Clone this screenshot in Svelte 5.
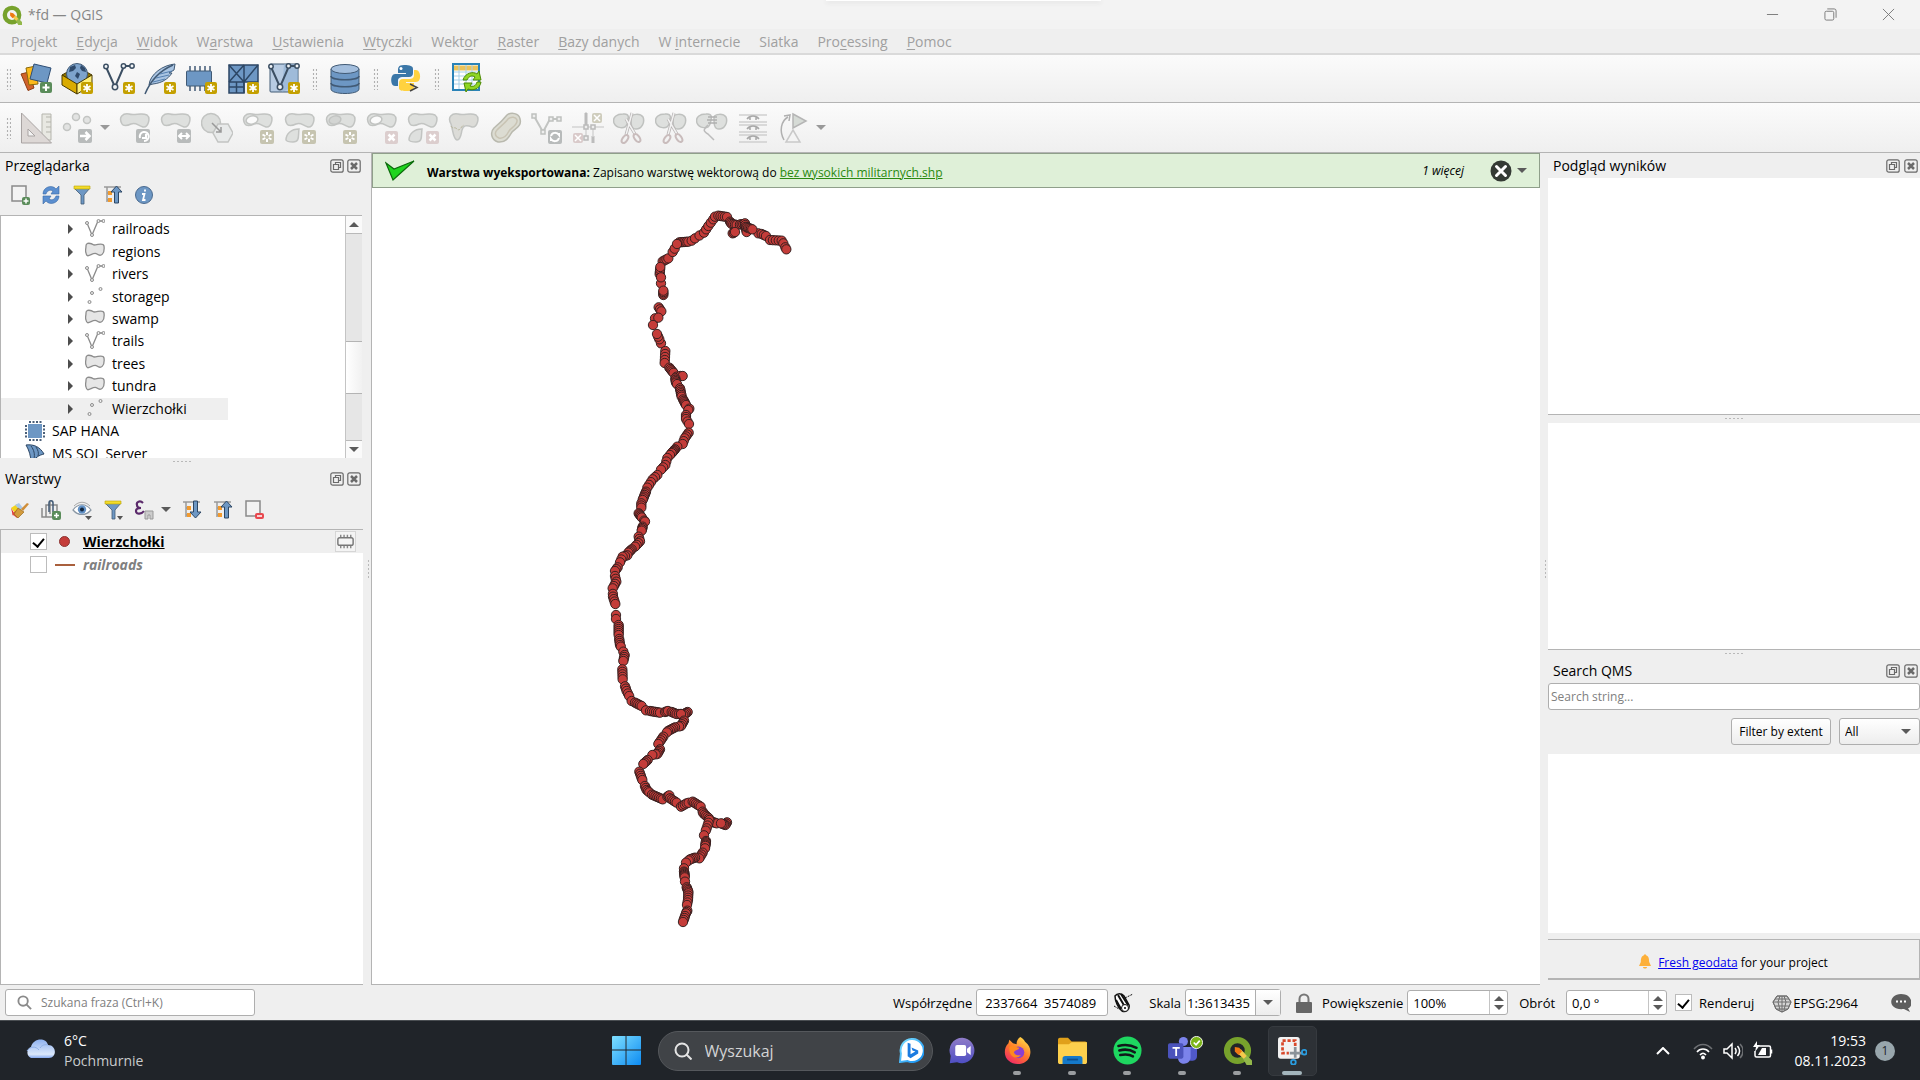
<script>
  const menus = [
    ['Pro', 'j', 'ekt'], ['', 'E', 'dycja'], ['', 'W', 'idok'], ['W', 'a', 'rstwa'], ['', 'U', 'stawienia'],
    ['', 'W', 'tyczki'], ['Wekt', 'o', 'r'], ['', 'R', 'aster'], ['', 'B', 'azy danych'], ['W ', 'i', 'nternecie'],
    ['Siatka', '', ''], ['Pro', 'c', 'essing'], ['', 'P', 'omoc']
  ];
  const dataTools = ['sources', 'package', 'newline', 'feather', 'memory', 'mesh', 'gpx'];
  const editTools = ['rotate', 'move', 'simplify', 'addring', 'addpart', 'fillring', 'delring', 'delpart', 'reshape', 'offset', 'vertex', 'trim', 'split', 'split', 'merge', 'align', 'turn'];
  const tree = [
    ['line', 'railroads'], ['poly', 'regions'], ['line', 'rivers'], ['point', 'storagep'], ['poly', 'swamp'],
    ['line', 'trails'], ['poly', 'trees'], ['poly', 'tundra'], ['point', 'Wierzchołki']
  ];
  const apps = ['Chat', 'Firefox', 'Eksplorator plików', 'Spotify', 'Teams', 'QGIS', 'Narzędzie Wycinanie'];

  // Each run: spacing, then the x, y pairs of the line that its vertices follow.
  const runs = [
    [7, 535, 130, 545, 132, 558, 138], [8, 570, 150, 605, 152, 610, 160, 619, 178],
    [6, 298, 157, 325, 155, 335, 152], [14, 345, 145, 372, 128, 385, 108, 400, 88], [7, 405, 80, 415, 77, 441, 81],
    [5, 450, 95, 455, 102, 470, 105, 490, 102], [5, 495, 100, 500, 126], [5, 500, 112, 517, 118], [5, 458, 130, 465, 126],
    [6, 248, 214, 265, 205], [12, 278, 186, 284, 176, 291, 162], [7, 239, 252, 241, 231], [18, 243, 280, 243, 262],
    [5, 250, 315, 250, 302], [9, 236, 352, 244, 364], [9, 225, 385, 235, 383], [9, 219, 405], [9, 243, 460, 238, 448, 231, 432],
    [9, 256, 483, 254, 519], [5, 268, 533, 290, 560], [9, 301, 558, 308, 558],
    [5, 286, 565, 288, 578, 300, 595, 305, 620, 318, 645], [5, 328, 656, 325, 660], [8, 318, 675, 318, 687, 327, 702, 326, 728, 314, 745, 308, 762, 292, 770],
    [4, 285, 778, 270, 795], [9, 262, 804, 256, 825, 243, 839], [10, 232, 855, 218, 868, 202, 893],
    [5, 198, 905, 188, 930], [7, 184, 940, 184, 953], [4, 176, 970, 195, 995], [4, 188, 1010, 185, 1022],
    [7, 176, 1040, 180, 1054, 165, 1070], [5, 155, 1078, 145, 1088], [8, 142, 1096, 128, 1100, 120, 1117],
    [6, 113, 1132, 105, 1143], [8, 105, 1158, 109, 1175, 98, 1195, 99, 1220, 106, 1242],
    [9, 108, 1275, 108, 1287], [6, 116, 1305, 116, 1335, 120, 1365, 130, 1385], [7, 134, 1395, 130, 1413],
    [8, 127, 1438, 128, 1468, 140, 1503, 155, 1533], [6, 165, 1538, 185, 1548, 198, 1561],
    [6, 210, 1563, 240, 1568], [6, 255, 1566, 264, 1563], [6, 275, 1566, 290, 1572, 303, 1572], [5, 316, 1570, 323, 1566, 310, 1575, 303, 1572],
    [6, 312, 1592, 303, 1608, 285, 1612, 264, 1623, 250, 1640, 235, 1662], [5, 240, 1678, 232, 1692, 217, 1695],
    [6, 203, 1710, 190, 1722], [6, 178, 1745, 187, 1770, 200, 1800, 216, 1814, 248, 1828],
    [4, 262, 1820, 268, 1816], [6, 270, 1825, 290, 1838, 303, 1850, 320, 1840, 338, 1835, 362, 1850, 370, 1870, 387, 1885],
    [5, 395, 1895, 410, 1900], [5, 441, 1897, 436, 1905, 423, 1900], [8, 388, 1890, 380, 1915, 372, 1936],
    [4, 378, 1953, 375, 1975], [7, 368, 1988, 358, 2005], [5, 345, 2003, 330, 2008, 318, 2018],
    [8, 312, 2035, 312, 2045], [4, 313, 2048, 314, 2062], [9, 315, 2075], [5, 320, 2092, 325, 2105], [7, 325, 2110, 324, 2130, 321, 2145],
    [5, 322, 2162, 318, 2170], [7, 315, 2178, 309, 2196]
  ];
  // Dense runs leave out two vertices of every seven, so whole markers show between the overlaps.
  const vertices = runs.flatMap(([step, ...c]) => {
    const out = [[c[0], c[1]]];
    let count = 0;
    for (let i = 2; i < c.length; i += 2) {
      const [x0, y0, x1, y1] = [c[i - 2], c[i - 1], c[i], c[i + 1]];
      const n = Math.max(1, Math.round(Math.hypot(x1 - x0, y1 - y0) / step));
      for (let k = 1; k <= n; k++) {
        const gap = step < 9 && [4, 5].includes(count++ % 7) && k < n;
        if (!gap) out.push([x0 + ((x1 - x0) * k) / n, y0 + ((y1 - y0) * k) / n]);
      }
    }
    return out;
  });
</script>

{#snippet star()}
  <rect x="20" y="19" width="12" height="12" rx="2" fill="#c4a000" />
  <path d="M26 21v8M22.500 23l7 4M29.500 23l-7 4" stroke="#fff" stroke-width="1.800" fill="none" />
{/snippet}

{#snippet greystar()}
  <rect x="18" y="18" width="14" height="14" rx="2" fill="#c6c4b0" />
  <path d="M25 20v10M20.500 22.500l9 5M29.500 22.500l-9 5" stroke="#fff" stroke-width="2" />
  <circle cx="25" cy="25" r="2" fill="#c6c4b0" />
{/snippet}

{#snippet greycross()}
  <rect x="19" y="19" width="13" height="13" rx="2" fill="#dccece" />
  <path d="M22.500 22.500l6 6M28.500 22.500l-6 6" stroke="#fff" stroke-width="2.500" />
{/snippet}

{#snippet qgis()}
  <svg class="qgis" viewBox="0 0 32 32" aria-hidden="true">
    <circle cx="16" cy="16" r="11.500" fill="none" stroke="#77a22c" stroke-width="7" />
    <path d="M18 18l4-1 10 10v5h-6z" fill="#93b84a" />
    <path d="M16 14l4 1 6 7-3 3-7-6z" fill="#f5c94c" />
    <path d="M13 12l5 1 3 4-4 4-4-4z" fill="#ee7913" />
  </svg>
{/snippet}

{#snippet tool(name)}
  <svg class="i32" viewBox="0 0 32 32" aria-hidden="true">
    {#if name === 'sources'}
      <path d="M1 11l8-2 5 16-6 2.500z" fill="#d0622b" stroke="#8f3d14" />
      <path d="M6 5l10-2 2 18-9 1z" fill="#fcb91b" stroke="#8a6a0a" />
      <path d="M14 1l17 4-4 15-17-4z" fill="#6d97c4" stroke="#2f4e75" />
      <rect x="20" y="19" width="12" height="11" rx="2" fill="#5a8c5a" />
      <path d="M26 21v7M22.500 24.500h7" stroke="#fff" stroke-width="2" />
    {:else if name === 'package'}
      <path d="M1 12l9-5h12l9 5-15 9z" fill="#8d7300" stroke="#4a3b00" />
      <circle cx="16" cy="11" r="10.500" fill="#7da3cc" stroke="#415a75" />
      <path d="M9 4l5-2 1 3-3 3-4 1zM20 2l4 3 1 4-4-1-2-3zM16 9l3 2-2 5-3-3z" fill="#2f4a6b" />
      <path d="M1 12l15 9v10L1 22z" fill="#d9ab00" stroke="#4a3b00" />
      <path d="M16 21l15-9v10l-15 9z" fill="#fff07a" stroke="#4a3b00" />
      {@render star()}
    {:else if name === 'newline' || name === 'gpx'}
      {#if name === 'gpx'}
        <rect x="2" y="1" width="28" height="28" rx="1" fill="#b7cbe2" stroke="#415a75" />
        <path d="M16 1h14v20L14 29z" fill="#8fb0d3" opacity=".6" />
      {/if}
      <path d="M3 4l9 20 9-21h8" fill="none" stroke="#3c4f63" stroke-width="2" />
      <g fill="#f2f5f8" stroke="#3c4f63" stroke-width="1.500"><circle cx="3" cy="3.500" r="2.200" /><circle cx="12" cy="24" r="2.700" /><circle cx="20.500" cy="3" r="2.200" /><circle cx="29" cy="3" r="2.200" /></g>
      {@render star()}
    {:else if name === 'feather'}
      <path d="M31 1C19 2 6 11 5 22l4-1c9-1 15-5 19-11l-3 0 5-3z" fill="#a9c4e2" stroke="#415a75" />
      <path d="M1 31C6 19 15 8 29 2" stroke="#415a75" stroke-width="1.500" fill="none" />
      <path d="M9 19l12-3M12 15l13-3M16 11l12-3" stroke="#5580b0" />
      {@render star()}
    {:else if name === 'memory'}
      <path d="M5 3v25M10 3v25M15 3v25M20 3v25M25 3v14" stroke="#415a75" stroke-width="1.500" />
      <rect x="1.500" y="8" width="25" height="15" rx="1" fill="#6d97c4" stroke="#415a75" />
      {@render star()}
    {:else if name === 'mesh'}
      <path d="M2 2h29v17H17v11H2z" fill="#6d97c4" stroke="#2c4664" stroke-width="1.500" />
      <path d="M17 2v28M2 19h15M2 24h15M9.500 19v11M2 2l15 17M17 2L2 19M31 2L17 19" fill="none" stroke="#2c4664" stroke-width="1.500" />
      {@render star()}
    {:else if name === 'database'}
      <path d="M2 6v20c0 6 28 6 28 0V6" fill="#6d97c4" stroke="#415a75" />
      <path d="M2 13c0 5 28 5 28 0M2 20c0 5 28 5 28 0" fill="none" stroke="#415a75" stroke-width="1.500" />
      <ellipse cx="16" cy="6" rx="14" ry="4.500" fill="#a3bedd" stroke="#415a75" />
    {:else if name === 'python'}
      <path d="M14 2c-6 0-6 3-6 6v2h8v1H5c-5 0-5 12 0 12h3v-5c0-3 2-4 5-4h6c3 0 4-2 4-4V6c0-3-3-4-9-4z" fill="#3b77a8" />
      <path d="M18 28c6 0 6-3 6-6v-2h-8v-1h10c6 0 5-12 0-12h-2v5c0 3-2 4-5 4h-6c-3 0-4 2-4 4v5c0 3 4 3 9 3z" fill="#ffd23f" />
      <circle cx="11" cy="5.500" r="1.500" fill="#fff" />
      <path d="M20 21l7 3.500-7 3.500" fill="none" stroke="#444" stroke-width="1.500" />
    {:else if name === 'refreshtable'}
      <rect x="2" y="1" width="26" height="26" fill="#fff" stroke="#2a83b8" stroke-width="2" />
      <path d="M3 5h24" stroke="#ecc35a" stroke-width="5" />
      <path d="M3 9h24M3 13h24M3 17h24M3 21h24M8 2v24M15 2v24M21 2v24" stroke="#a9d0e8" />
      <path d="M12 17c2-7 10-9 14-6l2-3 2 9h-8l2-3c-3-2-6-1-8 3z" fill="#8fd624" stroke="#4d8a05" />
      <path d="M30 19c-1 7-8 9-13 7l-2 3-2-9h8l-2 3c3 1 6 0 7-4z" fill="#8fd624" stroke="#4d8a05" />
    {:else if name === 'ruler'}
      <path d="M22 2h9v26h-9z" fill="#e8e8e2" stroke="#b5b5ad" />
      <path d="M26 5h5M26 10h5M26 15h5M26 20h5" stroke="#b5b5ad" />
      <path fill-rule="evenodd" d="M1.500 1v30h30zM8 17v7h7z" fill="#ddd8d6" stroke="#a8a3a2" />
    {:else if name === 'points'}
      <g fill="#e2e3e2" stroke="#c3c5c3" stroke-width="1.500"><circle cx="14" cy="5" r="3.500" /><circle cx="25" cy="8" r="3.500" /><circle cx="5" cy="15" r="3.500" /></g>
      <rect x="16" y="17" width="14" height="14" rx="2" fill="#b8bbbb" />
      <path d="M18 24h9M23.500 20l4 4-4 4" stroke="#fff" stroke-width="2.500" fill="none" />
    {:else if ['rotate', 'move', 'addring', 'addpart', 'fillring', 'delring', 'delpart'].includes(name)}
      <path d="M3 12C-1 5 4 1 10 2c6 2 12-2 18 1 4 3 1 13-4 12C18 13 17 10 12 12c-4 2-8 2-9 0z" fill="#dee0de" stroke="#c2c4c2" stroke-width="1.500" />
      {#if name === 'rotate' || name === 'move'}
        <rect x="17" y="17" width="14" height="14" rx="2" fill="#b8bbbb" />
        {#if name === 'rotate'}<path d="M21 26a4.500 4.500 0 1 1 4 3M27 22v4h-4" stroke="#fff" stroke-width="2" fill="none" />
        {:else}<path d="M19.500 24h9M22 21l-3 3 3 3M26 21l3 3-3 3" stroke="#fff" stroke-width="2" fill="none" />{/if}
      {:else}
        {#if name.endsWith('ring')}<ellipse cx="10" cy="8" rx="6" ry="4" transform="rotate(-15 10 8)" fill={name === 'fillring' ? '#d3d5d3' : '#fbfbfb'} stroke="#c2c4c2" stroke-width="1.500" />{/if}
        {#if name.endsWith('part')}<path d="M2 28c0-6 5-11 13-11-1 7 1 13-6 13-3 0-6 0-7-2z" fill="#dee0de" stroke="#c2c4c2" stroke-width="1.500" />{/if}
        {#if name.startsWith('del')}{@render greycross()}{:else}{@render greystar()}{/if}
      {/if}
    {:else if name === 'simplify'}
      <circle cx="10" cy="11" r="9.500" fill="#dcdedc" stroke="#c2c4c2" stroke-width="1.500" />
      <path d="M17 12h10l5 9-5 9H17l-5-9z" fill="#e8eaea" stroke="#c2c4c2" stroke-width="1.500" />
      <path d="M11 11l9 9M20 15v5h-5" fill="none" stroke="#999" stroke-width="1.500" />
    {:else if name === 'reshape'}
      <path d="M3 12C-1 5 4 1 10 2c6 2 12-2 18 1 4 3 1 13-4 12-5-2-9-2-10 3-1 4-1 10-5 10-4-1-4-10-6-16z" fill="#dcdcd8" stroke="#c2c4c2" stroke-width="1.500" />
      <path d="M3 14c2 4 3 0 6 3s4-3 7-4" stroke="#b9b69c" stroke-dasharray="3 1" fill="none" />
    {:else if name === 'offset'}
      <path d="M17 3c4-3 12-2 13 4 2 7-4 9-8 13-3 5-6 11-14 10C1 28 0 20 4 16c5-4 9-8 13-13z" fill="#dcdcd2" stroke="#b9b9ae" stroke-width="1.500" />
      <path d="M18 7c3-3 8-2 9 1 1 5-5 7-8 11-2 4-5 8-10 7-5-2-4-6-2-8 4-4 8-7 11-11z" fill="none" stroke="#c9c4b4" stroke-width="1.500" />
    {:else if name === 'vertex'}
      <path d="M3 4l9 16 7-13h9" fill="none" stroke="#c2c4c2" stroke-width="2" />
      <g fill="#eee" stroke="#bfc1bf" stroke-width="1.500"><path d="M1 2h4v4H1zM10 18h4v4h-4zM18 5h4v4h-4zM26 5h4v4h-4z" /></g>
      <rect x="17" y="18" width="14" height="14" rx="2" fill="#b8bbbb" />
      <path d="M20 24c1-4 6-4 8-1v-2M28 26c-1 4-6 4-8 1v2" stroke="#fff" stroke-width="2" fill="none" />
    {:else if name === 'trim'}
      <path d="M0 15h32M14 0v28" stroke="#d4d4d4" stroke-width="1.500" /><path d="M14 1v12M21 24v7" stroke="#bcbcbc" stroke-width="3" /><path d="M21 17v8" stroke="#d4d4d4" stroke-width="1.500" />
      <path d="M12 13h4v4h-4zM19 13h4v4h-4zM12 24h4v4h-4z" fill="#eee" stroke="#bbb" stroke-width="1.500" />
      <rect x="20" y="1" width="10" height="10" rx="2" fill="#cfcdbd" /><path d="M22 3l6 6M28 3l-6 6" stroke="#fff" stroke-width="1.500" />
      <rect x="1" y="21" width="10" height="10" rx="2" fill="#d9caca" /><path d="M3 23l6 6M9 23l-6 6" stroke="#fff" stroke-width="1.500" />
    {:else if name === 'split' || name === 'merge'}
      <path d="M10 2c8-1 5 6 4 10-2 6-11 4-13-1C-1 5 4 2 10 2zM18 5c1-3 9-4 12 0 2 5-1 12-7 12-5 0-5-5-5-12z" fill="#dee0de" stroke="#bfc1bf" stroke-width="1.500" />
      {#if name === 'split'}
        <path d="M19 1l-6 22M13 7l9 15" stroke="#b8b4b4" stroke-width="3" /><path d="M19 1l-6 22M13 7l9 15" stroke="#f2f2f2" stroke-width="1.500" />
        <ellipse cx="12" cy="27" rx="2.500" ry="4.500" transform="rotate(35 12 27)" fill="none" stroke="#c9bcbc" stroke-width="2" /><ellipse cx="24" cy="26" rx="2.500" ry="4.500" transform="rotate(-35 24 26)" fill="none" stroke="#c9bcbc" stroke-width="2" />
      {:else}
        <path d="M12 5h9M11 8h10M12 11h9" stroke="#b0b0b0" stroke-width="1.500" /><path d="M12 13c-5 5-5 6 0 9l6 6" fill="none" stroke="#bbb" stroke-width="1.500" />
      {/if}
    {:else if name === 'align'}
      <path d="M2 3h28M2 10h28M2 13h28M2 20h28M2 23h28M2 30h28" stroke="#d0d0d0" stroke-width="1.500" />
      <path d="M10 7c3-4 9-4 12 0M10 17c3-4 9-4 12 0M10 27c3-4 9-4 12 0M13 4v4M19 4v4M13 14v4M19 14v4M13 24v4M19 24v4" stroke="#a8a8a8" stroke-width="1.500" fill="none" />
    {:else if name === 'turn'}
      <path d="M15 2l13 7-13 7z" fill="#d6dbd6" stroke="#b5b5b5" stroke-width="1.500" /><path d="M15 18l7 12H8z" fill="#f4f4f4" stroke="#c9c9c9" stroke-width="1.500" />
      <path d="M6 28C1 19 3 9 10 5M6 4l6-1-1 6" fill="none" stroke="#b0b0b0" stroke-width="1.500" />
    {/if}
  </svg>
{/snippet}

{#snippet mini(name)}
  <svg class="i20" viewBox="0 0 20 20" aria-hidden="true">
    {#if name === 'add'}
      <rect x="2" y="1" width="14" height="15" fill="#f3f3f3" stroke="#8a8a8a" stroke-width="1.500" />
      <rect x="12" y="12" width="8" height="8" rx="2" fill="#5a8c5a" /><path d="M16 13.500v5M13.500 16h5" stroke="#fff" stroke-width="1.500" />
    {:else if name === 'refresh'}
      <path d="M2 9c0-7 9-10 13-5l3-3v8h-8l2-3C9 4 6 6 5 9z" fill="#5b8fd0" stroke="#3a6aa5" stroke-width=".6" /><path d="M18 11c0 7-9 10-13 5l-3 3v-8h8l-2 3c3 2 6 0 7-3z" fill="#5b8fd0" stroke="#3a6aa5" stroke-width=".6" />
    {:else if name === 'filter' || name === 'filter2'}
      <path d="M2 3h16l-6 7v9H9v-9z" fill="#6d97c4" stroke="#415a75" stroke-width=".8" /><path d="M2 1h16v3H2z" fill="#f3dc2c" stroke="#b9a100" stroke-width=".6" />
    {:else if name === 'collapse' || name === 'expand'}
      <path d="M1 2h17M4 2v15M4 8h4M4 15h4" stroke="#9a9a9a" stroke-width="1.500" fill="none" /><path d="M5 6h4v4H5zM5 13h4v4H5z" fill="#f29a2e" />
      <path d={name === 'collapse' ? 'M13.500 1l5.500 6h-3.500v11h-4V7H8z' : 'M13.500 18l5.500-6h-3.500V1h-4v11H8z'} fill="#6d97c4" stroke="#2c4664" />
    {:else if name === 'info'}
      <circle cx="10" cy="10" r="8.500" fill="#6d97c4" stroke="#4a6a8f" /><path d="M11 4.500l0 2M8 9h2.500l-1.500 6h2.500" stroke="#fff" stroke-width="1.800" fill="none" />
    {:else if name === 'brush'}
      <path d="M1 8l6-4 5 5-7 4z" fill="#f3d41c" /><path d="M1 8l3 5-1 3z" fill="#e22a2a" /><path d="M2 14l5 4 6-6-5-3z" fill="#e0473c" /><path d="M5 5l4-2 4 5-3 2z" fill="#a8c8ea" />
      <path d="M8 8l6 4-6 6-4-4z" fill="#d39b3c" stroke="#9a6a1c" stroke-width=".7" /><path d="M11 9l6-6 2 1-6 7z" fill="#cf8e3a" />
    {:else if name === 'group'}
      <path d="M1 8v9h9M5 5h11v12H5zM9 2v12" fill="none" stroke="#8a8a8a" stroke-width="1.500" /><path d="M8 12V3c0-3 4-3 4 0v9" fill="none" stroke="#415a75" stroke-width="1.500" />
      <rect x="11" y="11" width="9" height="9" rx="2" fill="#5a8c5a" /><path d="M15.500 13v5M13 15.500h5" stroke="#fff" stroke-width="1.500" />
    {:else if name === 'eye'}
      <path d="M1 10c5-7 13-7 18 0-5 6-13 6-18 0z" fill="#fff" stroke="#8a97a4" stroke-width="1.200" /><path d="M2 6c5-5 11-5 16 0" fill="none" stroke="#aaa" /><circle cx="10" cy="9.500" r="4.200" fill="#5f8fc4" /><circle cx="10" cy="9.500" r="2" fill="#12263d" /><path d="M13 16h7l-3.500 4z" fill="#555" />
    {:else if name === 'epsilon'}
      <path d="M9 3c-3-3-7-1-6 2 0 2 2 3 4 3-3 0-5 1-5 3 0 4 6 3 8 0" fill="none" stroke="#5b2a6b" stroke-width="2.200" /><path d="M11 11h8v8h-3v-4h-2v4h-3z" fill="#ccc" stroke="#999" />
    {:else if name === 'remove'}
      <rect x="2" y="1" width="14" height="15" fill="#f3f3f3" stroke="#8a8a8a" stroke-width="1.500" /><rect x="11" y="13" width="9" height="6" rx="2" fill="#e8484f" /><path d="M13 16h5" stroke="#fff" stroke-width="1.500" />
    {/if}
    {#if name === 'filter2'}<path d="M14 16h6l-3 4z" fill="#555" />{/if}
  </svg>
{/snippet}

{#snippet layer(kind)}
  <svg class="i20" viewBox="0 0 20 20" aria-hidden="true">
    {#if kind === 'line'}
      <path d="M2 4l5 12 6-14h6" fill="none" stroke="#8c8c8c" stroke-width="1.300" /><g fill="#eee" stroke="#8c8c8c"><circle cx="2" cy="4" r="1.500" /><circle cx="7" cy="16" r="1.500" /><circle cx="13.500" cy="2" r="1.500" /><circle cx="18.500" cy="2" r="1.500" /></g>
    {:else if kind === 'poly'}
      <path d="M1 4c0-4 5-3 8-1 4 0 9-3 10 1 1 8-3 11-7 8-4-3-10 6-11-1-1-3 0-4 0-7z" fill="#e6e6e6" stroke="#8c8c8c" stroke-width="1.300" />
    {:else}
      <g fill="#eee" stroke="#8c8c8c"><circle cx="7" cy="6" r="1.500" /><circle cx="15.500" cy="2" r="1.500" /><circle cx="4.500" cy="15" r="1.500" /></g>
    {/if}
  </svg>
{/snippet}

{#snippet dock(title)}
  <header class="dock">
    <h2>{title}</h2>
    <button aria-label="Odłącz panel {title}"><svg viewBox="0 0 14 14"><rect x=".8" y=".8" width="12.400" height="12.400" rx="2" /><path d="M3.500 5.500h5v5h-5zM5.500 5.500v-2h5v5h-2" /></svg></button>
    <button aria-label="Zamknij panel {title}"><svg viewBox="0 0 14 14"><rect x=".8" y=".8" width="12.400" height="12.400" rx="2" /><path class="thick" d="M4 4l6 6M10 4l-6 6" /></svg></button>
  </header>
{/snippet}

{#snippet app(i)}
  <svg class="appicon" viewBox="0 0 32 32" aria-hidden="true">
    {#if i === 0}
      <path d="M16 2a14 14 0 1 1-6 27l-8 1 1-8A14 14 0 0 1 16 2z" fill="url(#chat)" /><rect x="8" y="10" width="12" height="12" rx="2" fill="#fff" /><path d="M21 14l4-3v10l-4-3z" fill="#fff" />
    {:else if i === 1}
      <path d="M19 1c4 2 5 5 6 6 4 3 6 8 5 13-1 7-7 11-14 11S2 26 2 18c0-4 1-7 4-10l1-4 4 4 4 1c0-3 1-6 4-8z" fill="url(#fox)" /><circle cx="17" cy="18" r="6.500" fill="#8a3fd1" /><path d="M7 12c5-3 7 1 11 1-1 3-5 2-6 5 1 3 4 4 8 3-5 6-14 2-13-9z" fill="#ff8a1e" />
    {:else if i === 2}
      <path d="M0 4c0-1 1-2 2-2h9l4 4h15c1 0 2 1 2 2v6H0z" fill="#e0a01a" /><path d="M0 9h12l3-2h17v22c0 1-1 2-2 2H2c-1 0-2-1-2-2z" fill="#fdd04d" /><path d="M5 31v-6c0-2 1-3 3-3h16c2 0 3 1 3 3v6z" fill="#1579c9" /><path d="M10 26h12" stroke="#0c4f8f" stroke-width="2" />
    {:else if i === 3}
      <circle cx="16" cy="16" r="15.500" fill="#1ed760" /><path d="M6 11c8-2 14-1 20 2M7 16c7-2 12-1 17 2M8 21c6-1 10-1 14 1.500" fill="none" stroke="#10181a" stroke-width="2.800" stroke-linecap="round" />
    {:else if i === 4}
      <circle cx="17" cy="6" r="5" fill="#7b83eb" /><path d="M20 12h12v10c0 6-8 7-10 3z" fill="#5059c9" /><path d="M11 12h14v11c0 10-14 10-14 1z" fill="#7b83eb" /><rect x="0" y="8" width="17" height="17" rx="2" fill="#4b53bc" /><path d="M5 13h8M9 13v9" stroke="#fff" stroke-width="2" />
    {:else}
      <rect x="0" y="1" width="24" height="24" rx="3" fill="#f2f2f2" /><path d="M19 11V5H5v14h7" fill="none" stroke="#d8482b" stroke-width="3" stroke-dasharray="3.500 2" /><path d="M19 12v12M13 19h14" stroke="#8a9299" stroke-width="3" /><circle cx="29" cy="18" r="2.600" fill="none" stroke="#2a9de0" stroke-width="2" /><circle cx="17" cy="29" r="2.600" fill="none" stroke="#2a9de0" stroke-width="2" />
    {/if}
  </svg>
{/snippet}

<div class="window">
  <header class="title">
    {@render qgis()}
    <h1>*fd — QGIS</h1>
    <span class="notch"></span>
    <div class="wincontrols">
      <button aria-label="Minimalizuj"><svg viewBox="0 0 14 14"><path d="M1 7h12" /></svg></button>
      <button aria-label="Przywróć"><svg viewBox="0 0 14 14"><rect x="1" y="3.500" width="9.500" height="9.500" rx="1.500" /><path d="M3.500 1h7.500a2 2 0 0 1 2 2v7.500" /></svg></button>
      <button aria-label="Zamknij"><svg viewBox="0 0 14 14"><path d="M1 1l12 12M13 1L1 13" /></svg></button>
    </div>
  </header>

  <nav class="menu">
    {#each menus as [a, u, b]}<button><span>{a}<u>{u}</u>{b}</span></button>{/each}
  </nav>

  <div class="toolbar" role="toolbar" aria-label="Źródła danych">
    <i class="grip"></i>
    <div class="data">{#each dataTools as t}<button aria-label={t}>{@render tool(t)}</button>{/each}</div>
    {#each ['database', 'python', 'refreshtable'] as t}<i class="grip"></i><button class="single" aria-label={t}>{@render tool(t)}</button>{/each}
  </div>
  <div class="toolbar" role="toolbar" aria-label="Zaawansowana digitalizacja">
    <i class="grip"></i>
    <button class="first" aria-label="ruler">{@render tool('ruler')}</button>
    <button class="drop" aria-label="points">{@render tool('points')}<i class="tri"></i></button>
    <div class="edit">{#each editTools as t}<button aria-label={t}>{@render tool(t)}</button>{/each}</div>
    <button class="more" aria-label="Więcej narzędzi"><i class="tri"></i></button>
  </div>

  <main>
    <aside class="left">
      {@render dock('Przeglądarka')}
      <div class="minibar">
        {#each ['add', 'refresh', 'filter', 'collapse', 'info'] as t}<button aria-label={t}>{@render mini(t)}</button>{/each}
      </div>
      <div class="browser">
        <ul>
          {#each tree as [kind, name], i}
            <li class="child" class:selected={i === 8}><i class="tri side"></i>{@render layer(kind)}<span>{name}</span></li>
          {/each}
          <li class="provider"><svg class="i20" viewBox="0 0 20 20"><rect x="3" y="3" width="14" height="14" fill="#6d97c4" /><path d="M4 1h13M4 19h13M1 4v13M19 4v13" stroke="#4a5f78" stroke-width="2" stroke-dasharray="2 1.500" /></svg><span>SAP HANA</span></li>
          <li class="provider"><svg class="i20" viewBox="0 0 20 20"><path d="M1 1c8-1 14 2 18 9-5 1-9 4-13 9C6 12 4 6 1 1z" fill="#6d97c4" stroke="#2c4664" /><path d="M6 2c3 4 4 8 3 13M11 3c2 3 3 6 2 9" fill="none" stroke="#2c4664" /></svg><span>MS SQL Server</span></li>
        </ul>
        <div class="scroll"><button aria-label="W górę"><i class="tri up"></i></button><div class="track"><div class="thumb"></div></div><button aria-label="W dół"><i class="tri"></i></button></div>
      </div>
      <i class="split"></i>
      {@render dock('Warstwy')}
      <div class="minibar layersbar">
        {#each ['brush', 'group', 'eye', 'filter2', 'epsilon'] as t}<button aria-label={t}>{@render mini(t)}</button>{/each}
        <i class="tri"></i>
        {#each ['expand', 'collapse', 'remove'] as t}<button aria-label={t}>{@render mini(t)}</button>{/each}
      </div>
      <div class="layers">
        <label class="on"><input type="checkbox" checked /><i class="dot"></i><b>Wierzchołki</b>
          <svg class="mem" viewBox="0 0 22 22" aria-hidden="true"><rect x=".5" y=".5" width="21" height="21" fill="#f4f4f4" stroke="#d5d5d5" /><path d="M6 4v14M9.500 4v14M13 4v14M16.500 4v14" stroke="#888" stroke-width="1.500" /><rect x="3" y="7" width="16" height="8" rx="2" fill="#f4f4f4" stroke="#777" stroke-width="1.500" /></svg>
        </label>
        <label><input type="checkbox" /><i class="dash"></i><em>railroads</em></label>
      </div>
    </aside>

    <i class="vsplit"></i>

    <section class="canvas">
      <div class="message">
        <svg class="tick" viewBox="0 0 30 22" aria-hidden="true"><path d="M1 3l8 6L29 1 8 20z" fill="#1fd51f" stroke="#0b6b0b" stroke-width="1.200" /></svg>
        <p><b>Warstwa wyeksportowana:</b> Zapisano warstwę wektorową do <a href="#plik">bez wysokich militarnych.shp</a></p>
        <em>1 więcej</em>
        <button class="dismiss" aria-label="Zamknij komunikat"><svg viewBox="0 0 22 22"><circle cx="11" cy="11" r="10.500" fill="#343a34" /><path d="M6.500 6.500l9 9M15.500 6.500l-9 9" stroke="#fff" stroke-width="3" stroke-linecap="round" /></svg></button>
        <i class="tri"></i>
      </div>
      <svg class="map" role="img" aria-label="Wierzchołki">
        <g transform="translate(208 2) scale(.33333)" fill="#c43c39" stroke="#2e1d1d" stroke-width="2.800">
          {#each vertices as [x, y]}<circle cx={x} cy={y} r="14" />{/each}
        </g>
      </svg>
    </section>

    <i class="vsplit"></i>

    <aside class="right">
      {@render dock('Podgląd wyników')}
      <div class="pane one"></div>
      <i class="split"></i>
      <div class="pane two"></div>
      <i class="split"></i>
      {@render dock('Search QMS')}
      <input class="field" aria-label="Search QMS" placeholder="Search string..." />
      <div class="filters">
        <button>Filter by extent</button>
        <span class="select"><select aria-label="Typ"><option>All</option></select><i class="tri"></i></span>
      </div>
      <div class="pane three"></div>
      <p class="fresh"><svg viewBox="0 0 12 15" aria-hidden="true"><path d="M6 0l1.500 1.500C10 2.500 10 5 10.200 8L12 12H0l1.800-4C2 5 2 2.500 4.500 1.500zM4 13h4c0 2-4 2-4 0z" fill="#fdb03a" /></svg><span><a href="#geodata">Fresh geodata</a> for your project</span></p>
    </aside>
  </main>

  <footer class="status">
    <label class="locator"><svg viewBox="0 0 16 16"><circle cx="6.500" cy="6.500" r="5" /><path d="M10 10l5 5" /></svg><input aria-label="Szukaj" placeholder="Szukana fraza (Ctrl+K)" /></label>
    <label class="coord" for="coord">Współrzędne</label><input id="coord" class="field" value="2337664  3574089" />
    <svg class="bug" viewBox="0 0 20 20" aria-hidden="true"><path d="M1 3c2-3 7-3 9 0l5 9c1 4-3 8-7 6C4 15 1 8 1 3z" fill="#fff" stroke="#111" stroke-width="1.500" /><path d="M4 2l7 12M7 1l7 11M2 7l5 9" stroke="#111" stroke-width="2" /><path d="M11 5l8-4M0 13l5 3" stroke="#111" stroke-dasharray="2 1" /><circle cx="11" cy="15" r="3.500" fill="#fff" stroke="#111" /><circle cx="11" cy="15" r="1" /></svg>
    <label for="scale">Skala</label>
    <span class="combo"><input id="scale" value="1:3613435" /><button aria-label="Wybierz skalę"><i class="tri"></i></button></span>
    <svg class="lock" viewBox="0 0 16 20" aria-hidden="true"><path d="M3.500 10V6a4.500 4.500 0 0 1 9 0v4" fill="none" stroke="#777" stroke-width="2" /><rect y="9" width="16" height="11" rx="1" fill="#666" /></svg>
    <label for="zoom">Powiększenie</label>
    <span class="spin"><input id="zoom" value="100%" /><span><i class="tri up"></i><i class="tri"></i></span></span>
    <label class="rot" for="rot">Obrót</label>
    <span class="spin"><input id="rot" value="0,0 °" /><span><i class="tri up"></i><i class="tri"></i></span></span>
    <label class="render"><input type="checkbox" checked />Renderuj</label>
    <button class="crs"><svg viewBox="0 0 20 20" aria-hidden="true"><path d="M5 3h10l4 6-3 7-6 3-6-3-3-7z" fill="#d5d5d5" /><path d="M5 3h10l4 6-3 7-6 3-6-3-3-7zM3 6h14M1 9h18M3 13h14M5 16h10M8 3L6 9l2 8M12 3l2 6-2 8M10 3v16" /></svg>EPSG:2964</button>
    <button class="chat" aria-label="Komunikaty"><svg viewBox="0 0 20 20"><path d="M10 1c13 0 12 14 7 14l2 4-6-3C-4 18-3 1 10 1z" fill="#5e5e5e" /><path d="M5 8.500h2M9 8.500h2M13 8.500h2" stroke="#fff" stroke-width="2" /></svg></button>
  </footer>

  <footer class="taskbar">
    <button class="weather">
      <svg viewBox="0 0 30 20" aria-hidden="true"><path d="M6 19a6 6 0 0 1 0-11C8-1 21-2 23 6c9 0 9 13 1 13z" fill="url(#cloud)" /><path d="M2 12c3-5 9-5 12-1M15 9c2-3 5-4 8-3" fill="none" stroke="#8fb0e8" /></svg>
      <span>6°C<small>Pochmurnie</small></span>
    </button>
    <div class="apps">
      <button class="start" aria-label="Start"><svg viewBox="0 0 30 30"><path d="M0 1a1 1 0 0 1 1-1h13v14H0zM15 0h14a1 1 0 0 1 1 1v13H15zM0 15h14v15H1a1 1 0 0 1-1-1zM15 15h15v14a1 1 0 0 1-1 1H15z" fill="url(#win)" /></svg></button>
      <label class="search"><svg class="glass" viewBox="0 0 18 18"><circle cx="8" cy="8" r="6.500" /><path d="M12.500 12.500l5 5" /></svg><input aria-label="Wyszukaj" placeholder="Wyszukaj" />
        <svg class="bing" viewBox="0 0 26 26" aria-hidden="true"><path d="M13 1a12 12 0 1 1-4 23l-8 1 1-9A12 12 0 0 1 13 1z" fill="#fff" stroke="url(#win)" stroke-width="2" /><path d="M9 5l3 1v11l5-3-3-1-1-3 7 3v3l-8 5-3-2z" fill="#1b7be0" /></svg>
      </label>
      {#each apps as name, i}
        <button class="app" class:active={i === 6} aria-label={name}>
          {#if i === 5}{@render qgis()}{:else}{@render app(i)}{/if}
          {#if i === 4}<svg class="badge" viewBox="0 0 14 14"><circle cx="7" cy="7" r="6.500" fill="#7cb518" stroke="#fff" /><path d="M4 7l2.500 2.500L10.500 5" fill="none" stroke="#fff" stroke-width="1.800" /></svg>{/if}
          {#if i > 0}<i class="run"></i>{/if}
        </button>
      {/each}
    </div>
    <div class="tray">
      <button aria-label="Pokaż ukryte ikony"><svg class="chev" viewBox="0 0 14 8"><path d="M1 7l6-6 6 6" /></svg></button>
      <button class="net" aria-label="Sieć, dźwięk i bateria">
        <svg viewBox="0 0 20 20"><path d="M1 8c5-6 13-6 18 0" opacity=".35" /><path d="M4 11c3-4 9-4 12 0M7 14c2-2.500 4-2.500 6 0" /><circle cx="10" cy="16.500" r="1.200" fill="#fff" /></svg>
        <svg viewBox="0 0 20 20"><path d="M1 8h3l5-5v14l-5-5H1zM12 7c1.500 2 1.500 4 0 6M14.500 5c2.500 3 2.500 7 0 10" /><path d="M17 3c4 4 4 10 0 14" opacity=".35" /></svg>
        <svg viewBox="0 0 20 20"><path d="M6 5h10a1.500 1.500 0 0 1 1.500 1.500v8A1.500 1.500 0 0 1 16 16H3.500A1.500 1.500 0 0 1 2 14.500V10M18.500 8.500v4" /><path d="M9 7h4v7H5z" fill="#fff" stroke="none" /><path d="M4 0L0 6h3L2 11l5-7H4z" fill="#fff" stroke="none" /></svg>
      </button>
      <button class="clock"><time datetime="2023-11-08T19:53">19:53<br />08.11.2023</time></button>
      <span class="count">1</span>
    </div>
  </footer>
</div>

<svg class="defs" aria-hidden="true">
  <defs>
    <linearGradient id="win" x1="0" y1="0" x2="1" y2="1"><stop offset="0" stop-color="#7fe0ff" /><stop offset="1" stop-color="#0d8bf2" /></linearGradient>
    <linearGradient id="chat" x1="0" y1="0" x2="0" y2="1"><stop offset="0" stop-color="#8f7cc8" /><stop offset="1" stop-color="#4f4fc4" /></linearGradient>
    <linearGradient id="fox" x1=".8" y1="0" x2=".2" y2="1"><stop offset="0" stop-color="#ffe14a" /><stop offset=".5" stop-color="#ff7a2a" /><stop offset="1" stop-color="#f0246a" /></linearGradient>
    <linearGradient id="cloud" x1="0" y1="0" x2="0" y2="1"><stop offset="0" stop-color="#8fb2f0" /><stop offset=".8" stop-color="#dbe8fb" /><stop offset="1" stop-color="#86aaf0" /></linearGradient>
  </defs>
</svg>

<style>
  :global(body) { margin: 0; }
  .window { height: 100vh; display: flex; flex-direction: column; background: #efefef; color: #000; font: 14px/20px 'Open Sans', 'Noto Sans', sans-serif; overflow: hidden; }
  .window * { box-sizing: border-box; }
  button { border: 0; padding: 0; background: none; font: inherit; color: inherit; display: flex; align-items: center; justify-content: center; }
  input, select { font: inherit; color: inherit; border: 0; padding: 0; background: none; min-width: 0; outline: 0; }
  h1, h2, p, ul { margin: 0; padding: 0; font: inherit; }
  svg { display: block; flex: none; }
  .defs { position: absolute; width: 0; height: 0; }
  .i32 { width: 32px; height: 32px; }
  .i20 { width: 20px; height: 20px; }
  .tri { flex: none; width: 0; height: 0; border: 5px solid transparent; border-top-color: #5a5a5a; border-bottom-width: 0; }
  .tri.up { border-width: 0 5px 5px; border-bottom-color: #5a5a5a; }
  .tri.side { border-width: 5px 0 5px 5px; border-top-color: transparent; border-left-color: #4d4d4d; }

  .title { position: relative; flex: none; height: 29px; display: flex; align-items: center; background: #f3f3f3; color: #868686; padding: 0 2px; }
  .title .qgis { width: 20px; height: 20px; }
  .title h1 { margin-left: 6px; }
  .notch { position: absolute; left: 43%; top: 0; width: 275px; height: 1px; background: #fff; box-shadow: 0 1px 5px #c4c4c4; }
  .wincontrols { margin-left: auto; display: flex; }
  .wincontrols button { width: 58px; height: 28px; }
  .wincontrols svg { width: 13px; height: 13px; fill: none; stroke: #777; }
  .wincontrols { padding-right: 1px; }

  .menu { flex: none; height: 26px; display: flex; gap: 1px; padding: 2px 0 0 2px; border-bottom: 2px solid #dadada; color: #a0a0a0; }
  .menu button { padding: 0 9px; }
  .menu span { white-space: pre; }
  u { text-underline-offset: 2px; }

  .toolbar { flex: none; height: 48px; display: flex; align-items: center; padding-left: 6px; background: linear-gradient(#fbfbfb, #efefef); border-bottom: 1px solid #b4b4b4; }
  .toolbar + .toolbar { height: 50px; }
  .grip { flex: none; width: 5px; height: 22px; background: radial-gradient(circle, #b0b0b0 40%, transparent 45%) 0 0 / 3px 4px; }
  .data { display: grid; grid-template-columns: repeat(7, 1fr); width: 290px; margin: 0 7px 0 4px; }
  .single { width: 46px; margin: 0 5px; }
  .first { margin-left: 9px; }
  .drop { gap: 6px; margin-left: 10px; }
  .drop .tri, .more .tri { border-top-color: #999; }
  .edit { display: grid; grid-template-columns: repeat(17, 1fr); width: 701px; margin-left: 4px; }
  .more { margin-left: 1px; }

  main { flex: 1; min-height: 0; display: flex; }
  .left { width: 363px; display: flex; flex-direction: column; }
  .dock { flex: none; height: 25px; display: flex; align-items: center; gap: 4px; padding: 0 2px 0 5px; }
  .left .dock { gap: 3px; }
  .dock h2 { flex: 1; }
  .dock svg { width: 14px; height: 14px; fill: none; stroke: #6a6a6a; stroke-width: 1.200; }
  .dock .thick { stroke-width: 2.500; }
  .minibar { flex: none; height: 37px; display: flex; align-items: center; gap: 11px; padding: 0 0 3px 10px; }
  .browser { flex: none; height: 243px; display: flex; background: #fff; border: 1px solid #b4b4b4; border-width: 1px 0 0 1px; margin-right: 1px; overflow: hidden; }
  ul { flex: 1; height: 249px; padding-top: 2px; display: grid; grid-template-rows: repeat(11, 1fr); list-style: none; }
  li { display: flex; align-items: center; }
  .child { width: 227px; padding-left: 67px; }
  .child .i20 { margin: 0 7px 0 12px; }
  .selected { background: #efefef; }
  .provider { padding-left: 24px; gap: 7px; }
  .scroll { width: 17px; display: flex; flex-direction: column; border-left: 1px solid #c4c4c4; background: #fafafa; }
  .scroll button { flex: none; height: 17px; }
  .track { flex: 1; background: #e6e6e6; border: 1px solid #b9b9b9; border-width: 1px 0; padding-top: 107px; }
  .thumb { height: 53px; background: linear-gradient(90deg, #fff, #f1f1f1); border: 1px solid #b4b4b4; border-width: 1px 0; }
  .split { flex: none; align-self: center; width: 20px; height: 8px; background: radial-gradient(circle, #b9b9b9 35%, transparent 40%) 0 2px / 4px 3px repeat-x; }
  .vsplit { flex: none; align-self: center; width: 8px; height: 20px; background: radial-gradient(circle, #b9b9b9 35%, transparent 40%) 4px 0 / 3px 4px repeat-y; }
  .layersbar { height: 38px; padding-bottom: 1px; }
  .layersbar .tri { margin-left: -4px; }
  .layers { flex: 1; background: #fff; border: 1px solid #b4b4b4; border-right: 0; }
  .layers label { display: flex; align-items: center; height: 23px; padding: 0 7px 0 29px; }
  .layers .on { background: #efefef; }
  input[type='checkbox'] { appearance: none; flex: none; margin: 0; width: 17px; height: 17px; border: 1px solid #bcbcbc; background: #fff; display: grid; place-items: center; }
  input[type='checkbox']:checked::after { content: ''; width: 5px; height: 9px; border: solid #000; border-width: 0 2px 2px 0; transform: rotate(40deg); }
  .dot { width: 11px; height: 11px; margin: 0 13px 0 12px; border-radius: 50%; background: #c43c39; border: 1px solid #8c3432; }
  .dash { width: 20px; height: 2px; margin: 0 8px; background: #a9603d; }
  .layers b { text-decoration: underline; flex: 1; }
  .layers em { font-weight: 700; color: #808080; }
  .mem { width: 21px; height: 21px; }

  .canvas { flex: 1; min-width: 0; display: flex; flex-direction: column; background: #fff; border: 1px solid #b4b4b4; border-width: 0 0 1px 1px; }
  .message { flex: none; height: 35px; display: flex; align-items: center; background: #dff0d8; border: 1px solid #8f9f8a; padding: 0 12px; font-size: 12px; }
  .message p { flex: 1; margin-left: 12px; padding-top: 4px; }
  .message em { margin-right: 26px; }
  .message a { color: #2a8a10; }
  .tick { width: 30px; height: 22px; }
  .dismiss { margin-right: 5px; }
  .dismiss svg { width: 22px; height: 22px; }
  .map { width: 100%; flex: 1; min-height: 0; }

  .right { width: 372px; display: flex; flex-direction: column; padding-bottom: 5px; }
  .pane { background: #fff; border-bottom: 1px solid #b4b4b4; }
  .one { flex: 238 0 0; }
  .two { flex: 228 0 0; }
  .three { flex: 180 0 0; border: 0; }
  .field { height: 27px; border: 1px solid #aeaeae; border-radius: 3px; background: #fff; }
  .right .field { font-size: 12px; padding: 0 2px; }
  input::placeholder { color: #808080; opacity: 1; }
  .filters { display: flex; justify-content: flex-end; align-items: flex-start; gap: 8px; padding: 8px 0 9px; font-size: 12px; }
  .filters button, .select { height: 27px; border: 1px solid #aeaeae; border-radius: 3px; background: linear-gradient(#fff, #ededed); }
  .filters button { width: 100px; }
  .select { width: 81px; display: flex; align-items: center; padding: 0 8px 0 5px; }
  select { appearance: none; flex: 1; }
  .fresh { flex: none; height: 41px; margin-top: 6px; display: flex; align-items: center; justify-content: center; gap: 7px; padding-top: 8px; border: 1px solid #b4b4b4; border-width: 1px 1px 2px 0; font-size: 12px; }
  .fresh svg { width: 12px; height: 15px; margin-bottom: 4px; }
  .fresh a { color: #00e; }

  .status { flex: none; height: 35px; display: flex; align-items: center; padding: 0 9px 0 5px; font-size: 13px; }
  .locator { width: 250px; height: 27px; display: flex; align-items: center; gap: 9px; padding-left: 11px; background: #fff; border: 1px solid #aeaeae; border-radius: 3px; font-size: 12px; }
  .locator input { flex: 1; }
  .locator svg { width: 15px; height: 15px; fill: none; stroke: #8a8a8a; stroke-width: 2; }
  .coord { margin-left: auto; }
  .status .field { width: 132px; margin: 0 6px 0 4px; padding: 0 8px; white-space: pre; }
  .bug { width: 20px; height: 20px; margin-right: 15px; }
  .combo, .spin { display: flex; height: 27px; margin-left: 4px; background: #fff; border: 1px solid #aeaeae; border-radius: 3px; }
  .combo { width: 96px; margin-right: 15px; }
  .combo input { flex: 1; padding-left: 1px; }
  .combo button { width: 25px; border-left: 1px solid #aeaeae; background: linear-gradient(#fff, #ededed); }
  .lock { width: 16px; height: 20px; margin-right: 10px; }
  .spin { width: 101px; height: 25px; }
  .spin input { flex: 1; padding-left: 5px; }
  .spin > span { width: 18px; border-left: 1px solid #c4c4c4; display: flex; flex-direction: column; align-items: center; justify-content: center; gap: 4px; }
  .rot { margin: 0 7px 0 11px; }
  .render { display: flex; align-items: center; gap: 7px; margin: 0 18px 0 8px; }
  .crs { gap: 1px; }
  .crs svg { width: 20px; height: 20px; fill: none; stroke: #6e6e6e; }
  .chat { margin-left: 33px; }
  .chat svg { width: 20px; height: 20px; }

  .taskbar { flex: none; height: 60px; display: grid; grid-template-columns: 1fr auto 1fr; align-items: center; background: #202429; border-top: 1px solid #4a4e52; color: #fff; }
  .weather { justify-self: start; gap: 9px; margin-left: 25px; text-align: left; }
  .weather svg { width: 30px; height: 20px; margin-bottom: 4px; }
  .weather small { display: block; font-size: 14px; color: #c9cbcd; }
  .apps { display: flex; align-items: center; padding-left: 8px; }
  .start svg { width: 29px; height: 29px; }
  .search { width: 275px; height: 40px; margin: 0 5px 0 17px; display: flex; align-items: center; padding: 0 8px 0 15px; background: #404347; border: 1px solid #55585c; border-radius: 20px; font-size: 16px; }
  .search input { flex: 1; margin-left: 13px; }
  .search input::placeholder { color: #d3d4d5; }
  .glass { width: 18px; height: 18px; fill: none; stroke: #e4e4e4; stroke-width: 2; }
  .bing { width: 25px; height: 25px; }
  .app { position: relative; width: 49px; height: 50px; margin-right: 6px; border-radius: 5px; }
  .app:last-child { margin-right: 0; }
  .active { background: #2d3136; border: 1px solid #363a3f; }
  .appicon, .app .qgis { width: 29px; height: 29px; }
  .run { position: absolute; bottom: 1px; left: 50%; width: 8px; height: 4px; margin-left: -4px; border-radius: 2px; background: #9a9da0; }
  .active .run { width: 20px; margin-left: -10px; bottom: 0; background: #a3b5bc; }
  .badge { position: absolute; top: 10px; right: 4px; width: 13px; height: 13px; }
  .tray { justify-self: end; display: flex; align-items: center; margin-right: 25px; }
  .tray svg { width: 20px; height: 20px; fill: none; stroke: #fff; stroke-width: 1.500; }
  .tray .chev { width: 14px; height: 8px; stroke-width: 2; }
  .net { gap: 10px; margin: 0 22px 0 23px; }
  .clock { text-align: right; }
  .count { width: 20px; height: 20px; margin-left: 9px; border-radius: 50%; background: #98a6ac; color: #20262b; font-size: 12px; text-align: center; }
</style>
